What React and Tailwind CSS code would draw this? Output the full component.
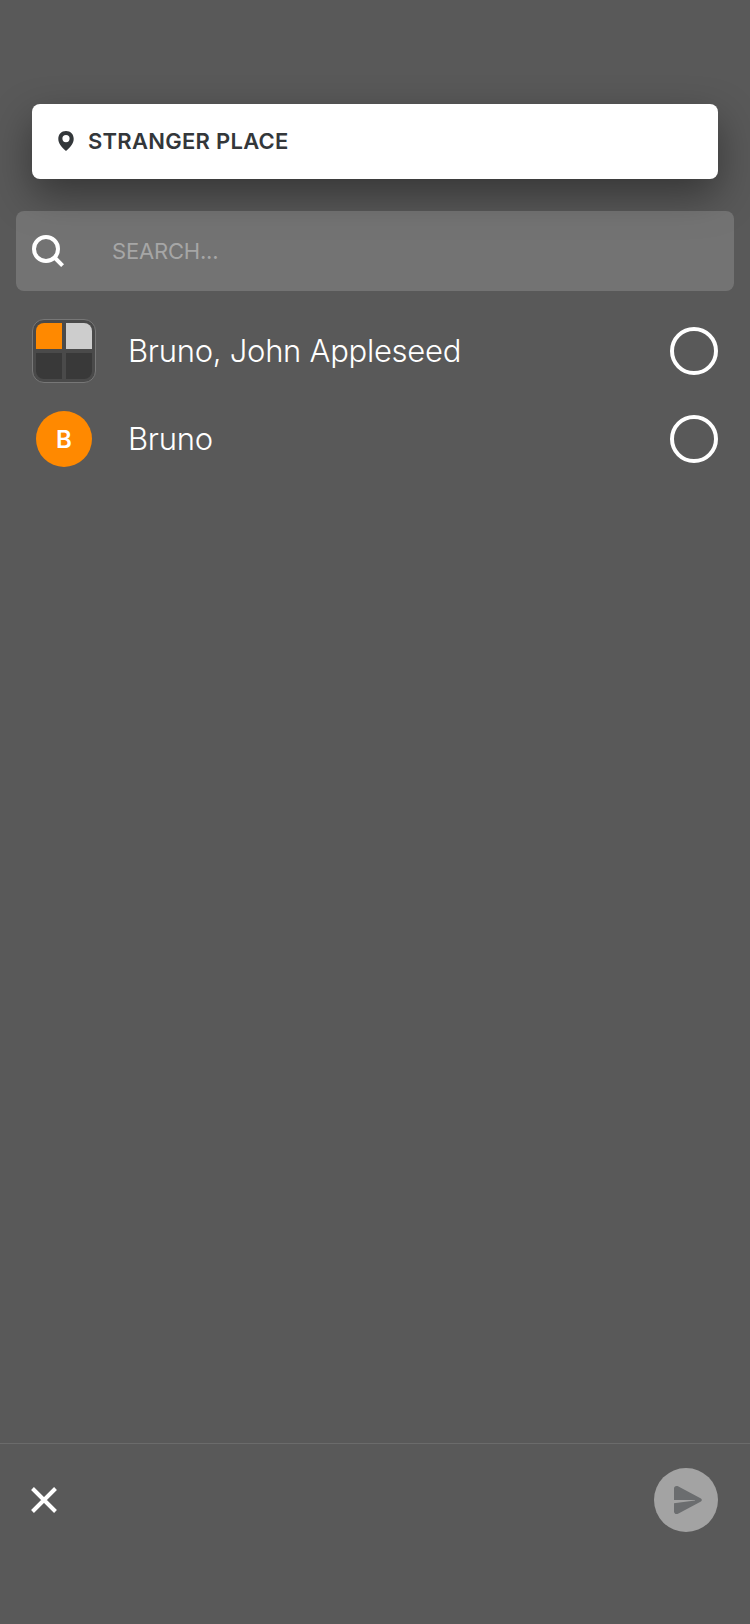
const CONTACTS = [
  { name: "Bruno, John Appleseed", group: true },
  { name: "Bruno", group: false },
];

function GroupAvatar() {
  return (
    <div className="h-16 w-16 rounded-[12px] border border-[#777777] bg-[#4a4a4a] p-[3px]">
      <div className="grid h-14 w-14 grid-cols-2 gap-1 overflow-hidden rounded-[8px]">
        <div className="bg-[#ff8900]" />
        <div className="bg-[#cdcdcd]" />
        <div className="bg-[#393939]" />
        <div className="bg-[#393939]" />
      </div>
    </div>
  );
}

function LetterAvatar({ letter }) {
  return (
    <div className="flex h-14 w-14 items-center justify-center rounded-full bg-[#ff8900] pt-0.5 text-[24px] leading-none font-semibold">
      {letter}
    </div>
  );
}

export default function App() {
  return (
    <div className="flex h-[1624px] w-[750px] flex-col overflow-hidden bg-[#595959] pt-[104px] font-['Inter',sans-serif] text-white">
      <div className="mx-8 flex h-[75px] shrink-0 items-center rounded-[8px] bg-white pb-[2px] pl-[26px] text-[#33373a] shadow-[0_16px_40px_rgba(0,0,0,0.4)]">
        <svg width="16" height="20" viewBox="0 0 16 20" fill="currentColor">
          <path fillRule="evenodd" d="M8 0C3.4 0 .3 3.3.3 7.8c0 4.5 2.9 8.3 7.7 12.2 4.8-3.9 7.7-7.7 7.7-12.2C15.700 3.300 12.600 0 8 0Zm0 4a3.600 3.600 0 1 1 0 7.200A3.600 3.600 0 0 1 8 4Z" />
        </svg>
        <span className="ml-[14px] text-[22px] leading-7 font-semibold tracking-[0.27px]">STRANGER PLACE</span>
      </div>

      <div className="mx-4 mt-8 flex h-20 shrink-0 items-center rounded-[8px] bg-white/16 pl-4">
        <svg width="32" height="32" viewBox="0 0 32 32" fill="none" stroke="currentColor" strokeWidth="4">
          <circle cx="14" cy="14" r="12" />
          <path d="m22 22 8.600 8.600" />
        </svg>
        <span className="ml-12 text-[22px] leading-7 tracking-[-0.2px] text-[#a6a6a6]">SEARCH...</span>
      </div>

      <ul className="mt-4 flex flex-col">
        {CONTACTS.map((c) => (
          <li key={c.name} className="flex h-[88px] items-center px-8">
            <div className="flex w-16 justify-center">
              {c.group ? <GroupAvatar /> : <LetterAvatar letter={c.name[0]} />}
            </div>
            <span className="ml-8 flex-1 text-[31px] leading-10 font-light tracking-[-0.27px]">{c.name}</span>
            <span className="h-12 w-12 rounded-full border-4 border-white" />
          </li>
        ))}
      </ul>

      <footer className="mt-auto flex h-[181px] items-start justify-between border-t border-[#6b6b6b] px-8 pt-6">
        <button className="flex h-16 items-center" aria-label="Close">
          <svg width="24" height="24" viewBox="0 0 24 24" className="overflow-visible" fill="none" stroke="currentColor" strokeWidth="4">
            <path d="M0.500 0.500 23.500 23.500M23.500 0.500 0.500 23.500" />
          </svg>
        </button>
        <button className="flex h-16 w-16 items-center justify-center rounded-full bg-[#a3a3a3] text-[#6b6d6f]" aria-label="Send">
          <svg width="64" height="64" viewBox="0 0 64 64" fill="currentColor">
            <path d="M20 20.500c0-2 2-3.300 4-2.200l22.500 11.900c1.800 1 1.800 2.600 0 3.600L24 45.700c-2 1.100-4-.2-4-2.200V35.300L41 32.600V32H20Z" />
          </svg>
        </button>
      </footer>
    </div>
  );
}
